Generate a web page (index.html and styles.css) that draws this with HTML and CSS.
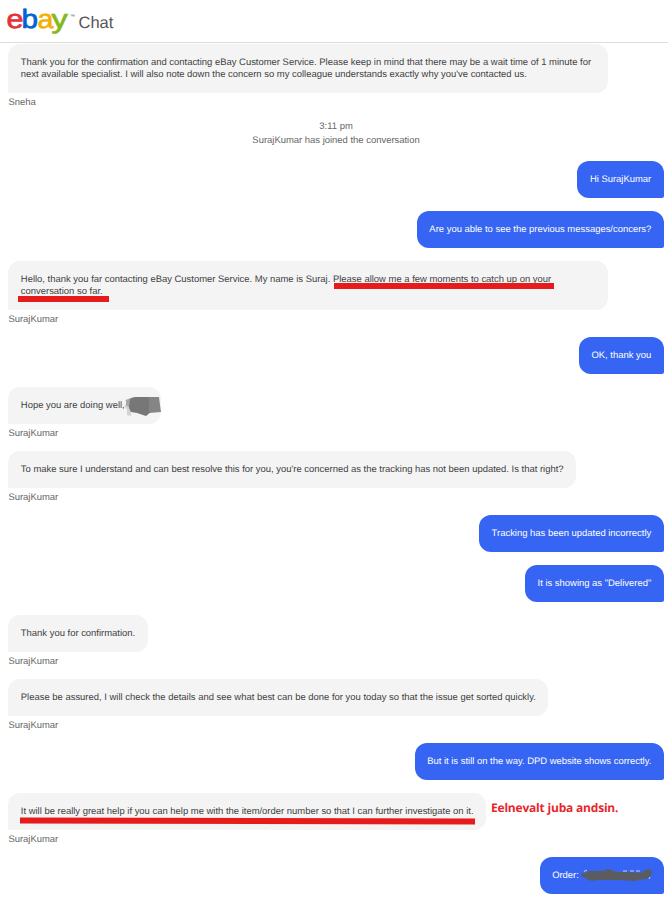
FILE: index.html
```html
<!DOCTYPE html>
<html lang="en">
<head>
    <meta charset="UTF-8">
    <meta name="viewport" content="width=device-width, initial-scale=1.0">
    <title>eBay Chat</title>
    <link rel="stylesheet" href="styles.css">
</head>
<body>
    <header class="header">
        <svg class="logo" width="68" height="30" viewBox="0 0 68 30" role="img" aria-label="ebay">
            <g class="logo-letters">
                <text class="logo-e" transform="translate(-1.4 22.3) scale(1.15 1)">e</text>
                <text class="logo-b" transform="translate(13.6 22.3) scale(1.12 1)">b</text>
                <text class="logo-a" transform="translate(29.6 22.3) scale(1.08 1)">a</text>
                <text class="logo-y" transform="translate(43.6 22) scale(1.22 1)">y</text>
            </g>
            <text class="logo-tm" x="62" y="11.5">™</text>
        </svg>
        <h1 class="title">Chat</h1>
    </header>

    <main class="chat">
        <div class="message agent">
            <div class="bubble wide">Thank you for the confirmation and contacting eBay Customer Service. Please keep in mind that there may be a wait time of 1 minute for<br>next available specialist. I will also note down the concern so my colleague understands exactly why you've contacted us.</div>
            <div class="author">Sneha</div>
        </div>

        <div class="notice">3:11 pm<br>SurajKumar has joined the conversation</div>

        <div class="message user">
            <div class="bubble">Hi SurajKumar</div>
        </div>
        <div class="message user">
            <div class="bubble">Are you able to see the previous messages/concers?</div>
        </div>

        <div class="message agent">
            <div class="bubble wide">Hello, thank you far contacting eBay Customer Service. My name is Suraj. <span class="marked mark-top">Please allow me a few moments to catch up on your</span><br><span class="marked mark-bottom">conversation so far.</span></div>
            <div class="author">SurajKumar</div>
        </div>

        <div class="message user">
            <div class="bubble">OK, thank you</div>
        </div>

        <div class="message agent">
            <div class="bubble name-hidden">Hope you are doing well,
                <svg class="smudge" width="40" height="22" viewBox="0 0 40 22">
                    <path fill="#d2d2d2" d="M2 4l8-3 5 3-3 10-4 1v5l-4-1v-6l-3-3 3-3z"/>
                    <path fill="#a6a6a6" d="M3 4l8-3 3 15-6-1-1-3-4-3z"/>
                    <path fill="#777" d="M7 3l5-2h16v15l-5 4-9-3-6-1-2-4z"/>
                    <path fill="#858585" d="M26 1h10l1 8 1 7-12 1z"/>
                </svg>
            </div>
            <div class="author">SurajKumar</div>
        </div>
        <div class="message agent">
            <div class="bubble">To make sure I understand and can best resolve this for you, you're concerned as the tracking has not been updated. Is that right?</div>
            <div class="author">SurajKumar</div>
        </div>

        <div class="message user">
            <div class="bubble">Tracking has been updated incorrectly</div>
        </div>
        <div class="message user">
            <div class="bubble">It is showing as "Delivered"</div>
        </div>

        <div class="message agent">
            <div class="bubble">Thank you for confirmation.</div>
            <div class="author">SurajKumar</div>
        </div>
        <div class="message agent">
            <div class="bubble">Please be assured, I will check the details and see what best can be done for you today so that the issue get sorted quickly.</div>
            <div class="author">SurajKumar</div>
        </div>

        <div class="message user">
            <div class="bubble">But it is still on the way. DPD website shows correctly.</div>
        </div>

        <div class="message agent">
            <div class="bubble"><span class="marked mark-long">It will be really great help if you can help me with the item/order number so that I can further investigate on it.</span>
                <span class="note">Eelnevalt juba andsin.</span>
            </div>
            <div class="author">SurajKumar</div>
        </div>

        <div class="message user">
            <div class="bubble order">Order:
                <svg class="scribble" width="74" height="14" viewBox="0 0 74 14">
                    <path fill="none" stroke="#c3cffa" d="M4 4q1-3 3-1M43 3h4M50 3h4M56 3h4M70 9l-1 2"/>
                    <path fill="#5b5c60" d="M1 6Q3 4 6 5Q8 2 13 3L24 3Q26 0 32 2L36 4L50 4L61 5L65 2Q70 0 72 3L71 7Q68 12 64 11L54 13L38 12L18 12Q12 13 8 12Q6 9 2 9Z"/>
                </svg>
            </div>
        </div>
    </main>
</body>
</html>
```
FILE: styles.css
```css
/* General Styling */
body {
    margin: 0;
    font-family: "Liberation Sans", Arial, sans-serif;
    font-size: 9.45px;
    line-height: 12px;
    text-rendering: geometricPrecision;
    color: #414141;
    background: #fff;
    overflow: hidden;
}

/* Header */
.header {
    display: flex;
    height: 43px;
    box-sizing: border-box;
    padding: 6px 0 0 8px;
    border-bottom: 1px solid #ddd;
}

.logo {
    overflow: visible;
}

.logo-letters {
    font-size: 26.5px;
    stroke-width: 0.7px;
}

.logo-e {
    fill: #e53238;
    stroke: #e53238;
}

.logo-b {
    fill: #0064d2;
    stroke: #0064d2;
}

.logo-a {
    fill: #f5af02;
    stroke: #f5af02;
}

.logo-y {
    fill: #86b817;
    stroke: #86b817;
}

.logo-tm {
    font-size: 5px;
    fill: #555;
}

.title {
    margin: 8px 0 0 2.5px;
    font-size: 16.5px;
    line-height: 18px;
    font-weight: normal;
    color: #555;
}

/* Messages */
.chat {
    padding: 0.8px 4.3px 0 8.4px;
}

.message {
    display: flex;
    flex-direction: column;
    align-items: flex-start;
    margin-bottom: 12.9px;
}

.bubble {
    position: relative;
    box-sizing: border-box;
    padding: 13px 12.45px 11.9px;
    border-radius: 12px 12px 12px 2px;
    background: #f4f4f4;
    white-space: nowrap;
}

.wide {
    width: 599.5px;
}

.user {
    align-items: flex-end;
}

.user .bubble {
    border-radius: 12px 12px 2px 12px;
    background: #3665f3;
    color: #fff;
}

.author {
    height: 14.5px;
    line-height: 19px;
    color: #666;
}

.notice {
    margin-bottom: 13px;
    text-align: center;
    line-height: 14px;
    color: #666;
}

/* Red underlines */
.marked {
    position: relative;
}

.marked::after {
    content: "";
    position: absolute;
    height: 6px;
    background: #e61c1c;
}

.mark-top::after {
    left: 1px;
    right: -3px;
    top: 9.5px;
}

.mark-bottom::after {
    left: -3px;
    right: -6px;
    top: 10.5px;
}

.mark-long::after {
    left: -1px;
    right: -1px;
    top: 12px;
    transform: rotate(0.15deg);
}

.note {
    position: absolute;
    left: 100%;
    top: 7px;
    margin-left: 5px;
    font-family: "Open Sans", sans-serif;
    font-size: 12px;
    line-height: 16px;
    font-weight: bold;
    letter-spacing: -0.2px;
    color: #e8262b;
}

/* Hidden name and order number */
.name-hidden {
    width: 153px;
}

.smudge {
    position: absolute;
    left: 115px;
    top: 9px;
}

.order {
    width: 124px;
}

.scribble {
    position: absolute;
    left: 40px;
    top: 11px;
}
```
